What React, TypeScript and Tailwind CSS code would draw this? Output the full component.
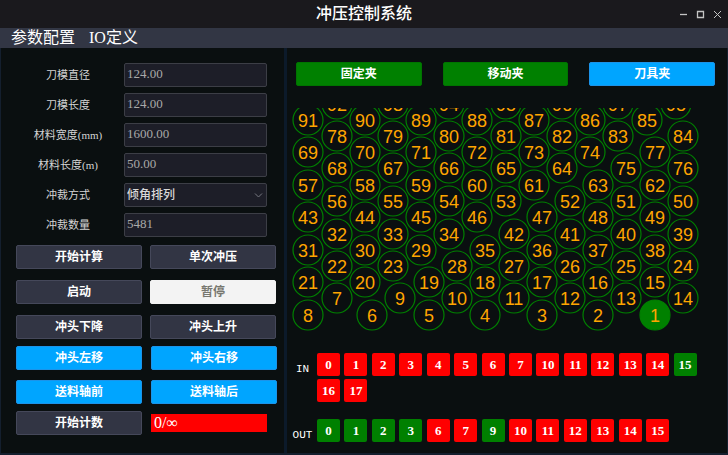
import React from 'react';

interface Hole {
  n: number;
  x: number;
  y: number;
}

// first number is the row's y, then [label, x] pairs
const rows: [number, [number, number][]][] = [
  [104, [[92, 337], [93, 393], [94, 449], [95, 506], [96, 562], [97, 618], [98, 676]]],
  [120, [[91, 308], [90, 365], [89, 421], [88, 477], [87, 534], [86, 590], [85, 647]]],
  [136, [[78, 337], [79, 393], [80, 449], [81, 506], [82, 562], [83, 618], [84, 683]]],
  [152, [[69, 308], [70, 365], [71, 421], [72, 477], [73, 534], [74, 590], [77, 655]]],
  [168, [[68, 337], [67, 393], [66, 449], [65, 506], [64, 562], [75, 626], [76, 683]]],
  [185, [[57, 308], [58, 365], [59, 421], [60, 477], [61, 534], [63, 598], [62, 655]]],
  [201, [[56, 337], [55, 393], [54, 449], [53, 506], [52, 570], [51, 626], [50, 683]]],
  [217, [[43, 308], [44, 365], [45, 421], [46, 477], [47, 542], [48, 598], [49, 655]]],
  [234, [[32, 337], [33, 393], [34, 449], [42, 514], [41, 570], [40, 626], [39, 683]]],
  [250, [[31, 308], [30, 365], [29, 421], [35, 485], [36, 542], [37, 598], [38, 655]]],
  [266, [[22, 337], [23, 393], [28, 457], [27, 514], [26, 570], [25, 626], [24, 683]]],
  [282, [[21, 308], [20, 365], [19, 429], [18, 485], [17, 542], [16, 598], [15, 655]]],
  [298, [[7, 337], [9, 400], [10, 457], [11, 514], [12, 570], [13, 626], [14, 683]]],
  [315, [[8, 308], [6, 372], [5, 429], [4, 485], [3, 542], [2, 598], [1, 655]]],
];

const holes: Hole[] = rows.flatMap(([y, cells]) => cells.map(([n, x]) => ({ n, x, y })));

const inputs = [
  { id: 0, on: false }, { id: 1, on: false }, { id: 2, on: false }, { id: 3, on: false },
  { id: 4, on: false }, { id: 5, on: false }, { id: 6, on: false }, { id: 7, on: false },
  { id: 10, on: false }, { id: 11, on: false }, { id: 12, on: false }, { id: 13, on: false },
  { id: 14, on: false }, { id: 15, on: true }, { id: 16, on: false }, { id: 17, on: false },
];

const outputs = [
  { id: 0, on: true }, { id: 1, on: true }, { id: 2, on: true }, { id: 3, on: true },
  { id: 6, on: false }, { id: 7, on: false }, { id: 9, on: true }, { id: 10, on: false },
  { id: 11, on: false }, { id: 12, on: false }, { id: 13, on: false }, { id: 14, on: false },
  { id: 15, on: false },
];

const fields = [
  { id: 'diameter', label: '刀模直径', value: '124.00' },
  { id: 'length', label: '刀模长度', value: '124.00' },
  { id: 'material-width', label: '材料宽度(mm)', value: '1600.00' },
  { id: 'material-length', label: '材料长度(m)', value: '50.00' },
];

const variants = {
  dark: 'border-[#45485a] bg-[#323544] text-white',
  blue: 'border-[#1c93e8] bg-[#00a5ff] text-white',
  green: 'border-[#007400] bg-[#008000] text-white',
  light: 'border-[#f3f3f3] bg-[#f3f3f3] text-[#77776f]',
};

const fieldBox =
  'h-6 w-full rounded-xs border border-[#3c3e46] bg-[#1d1e28] px-[2px] outline-none';

const Button: React.FC<{ variant?: keyof typeof variants; children: React.ReactNode }> = ({
  variant = 'dark',
  children,
}) => (
  <button
    type="button"
    className={`flex h-6 w-full items-center justify-center rounded-xs border text-xs font-bold ${variants[variant]}`}
  >
    {children}
  </button>
);

const Row: React.FC<{ id: string; label: string; children: React.ReactNode }> = ({ id, label, children }) => (
  <div className="flex items-center">
    <label htmlFor={id} className="w-[108px] shrink-0 pr-1 text-center text-[11px] text-[#d4d4d4]">
      {label}
    </label>
    <div className="relative min-w-0 flex-1">{children}</div>
  </div>
);

const Ports: React.FC<{ label: string; ports: { id: number; on: boolean }[] }> = ({ label, ports }) => (
  <div className="flex">
    <span className="w-[25px] shrink-0 pt-2 pr-1 text-center font-['Liberation_Mono',monospace] text-[11px] leading-4 text-white">
      {label}
    </span>
    <div className="grid flex-1 grid-cols-14 gap-y-[3px]">
      {ports.map((p) => (
        <button
          key={p.id}
          type="button"
          className={`h-[23px] w-[23px] rounded-xs text-[13px] leading-none font-bold text-white ${p.on ? 'bg-[#008000]' : 'bg-[#ff0000]'}`}
        >
          {p.id}
        </button>
      ))}
    </div>
  </div>
);

const HoleMap = () => (
  <svg viewBox="290 108 416 224" className="block w-full" role="img" aria-label="排列图">
    {holes.map(({ n, x, y }) => (
      <g key={n}>
        <circle cx={x} cy={y} r="15" fill={n === 1 ? '#008000' : 'none'} stroke="#008000" strokeWidth="1.2" />
        <text
          x={x}
          y={y + 7}
          textAnchor="middle"
          fill="#ffa500"
          className="font-['Liberation_Sans',sans-serif] text-[18px]"
        >
          {n}
        </text>
      </g>
    ))}
  </svg>
);

export default function App() {
  return (
    <div className="flex min-h-screen flex-col bg-[#0a0f10] font-['Liberation_Serif','Noto_Sans_CJK_SC',serif] text-white">
      <header className="grid h-7 grid-cols-[1fr_auto_1fr] items-center bg-[#1a191d]">
        <h1 className="col-start-2 text-base leading-7 font-medium">冲压控制系统</h1>
        <div className="flex justify-end pr-[2px] text-[#c4c4c4]">
          <button type="button" aria-label="最小化" className="flex h-4 w-[17px] items-center justify-center">
            <svg width="9" height="9" viewBox="0 0 9 9" stroke="currentColor">
              <path d="M1 4.5h7" strokeWidth="1.3" />
            </svg>
          </button>
          <button type="button" aria-label="最大化" className="flex h-4 w-[17px] items-center justify-center">
            <svg width="9" height="9" viewBox="0 0 9 9" fill="none" stroke="currentColor">
              <path d="M1.5 1.500h6v6h-6z" strokeWidth="1.3" />
            </svg>
          </button>
          <button type="button" aria-label="关闭" className="flex h-4 w-[17px] items-center justify-center">
            <svg width="9" height="9" viewBox="0 0 9 9" stroke="currentColor">
              <path d="M1 1l7 7M8 1l-7 7" />
            </svg>
          </button>
        </div>
      </header>

      <nav className="flex h-5 items-center gap-[14px] bg-[#323644] px-[11px] text-base leading-5">
        <button type="button">参数配置</button>
        <button type="button">IO定义</button>
      </nav>

      <div className="flex flex-1 border-x border-b-2 border-[#141f2e]">
        <main className="w-[286px] shrink-0 border-r-3 border-[#0c1a2a] pt-[15px] pl-[15px]">
          <form className="flex w-[251px] flex-col gap-[6px]">
            {fields.map((f) => (
              <Row key={f.id} id={f.id} label={f.label}>
                <input
                  id={f.id}
                  defaultValue={f.value}
                  className={`${fieldBox} block pb-[3px] text-[13px] text-[#a9a9a9]`}
                />
              </Row>
            ))}
            <Row id="mode" label="冲裁方式">
              <select id="mode" className={`${fieldBox} block appearance-none text-xs font-medium text-[#d8d8d8]`}>
                <option>倾角排列</option>
              </select>
              <svg
                className="pointer-events-none absolute top-2 right-1"
                width="9"
                height="9"
                viewBox="0 0 9 9"
                fill="none"
                stroke="#777981"
              >
                <path d="M1 2.500l3.500 3.500L8 2.500" />
              </svg>
            </Row>
            <Row id="count" label="冲裁数量">
              <input
                id="count"
                defaultValue="5481"
                className={`${fieldBox} block pb-[3px] text-[13px] text-[#a9a9a9]`}
              />
            </Row>
          </form>

          <div className="mt-2 grid w-[260px] grid-cols-2 gap-x-2 gap-y-[11px]">
            <Button>开始计算</Button>
            <Button>单次冲压</Button>
            <Button>启动</Button>
            <Button variant="light">暂停</Button>
            <Button>冲头下降</Button>
            <Button>冲头上升</Button>
          </div>
          <div className="mt-[7px] grid w-[261px] grid-cols-2 gap-x-[9px] gap-y-[10px]">
            <Button variant="blue">冲头左移</Button>
            <Button variant="blue">冲头右移</Button>
            <Button variant="blue">送料轴前</Button>
            <Button variant="blue">送料轴后</Button>
          </div>
          <div className="mt-[7px] grid w-[261px] grid-cols-2 items-center gap-x-[9px]">
            <Button>开始计数</Button>
            <output className="mr-[10px] block h-[18px] bg-[#ff0000] pl-[3px] text-base leading-[18px]">0/∞</output>
          </div>
        </main>

        <section className="min-w-0 flex-1 pt-[14px]">
          <div className="flex gap-[21px] pr-3 pl-[9px]">
            <Button variant="green">固定夹</Button>
            <Button variant="green">移动夹</Button>
            <Button variant="blue">刀具夹</Button>
          </div>
          <div className="mt-[22px] pr-[21px] pl-[3px]">
            <HoleMap />
          </div>
          <div className="mt-[21px] flex flex-col gap-[17px] pr-[26px] pl-[5px]">
            <Ports label="IN" ports={inputs} />
            <Ports label="OUT" ports={outputs} />
          </div>
        </section>
      </div>
    </div>
  );
}
